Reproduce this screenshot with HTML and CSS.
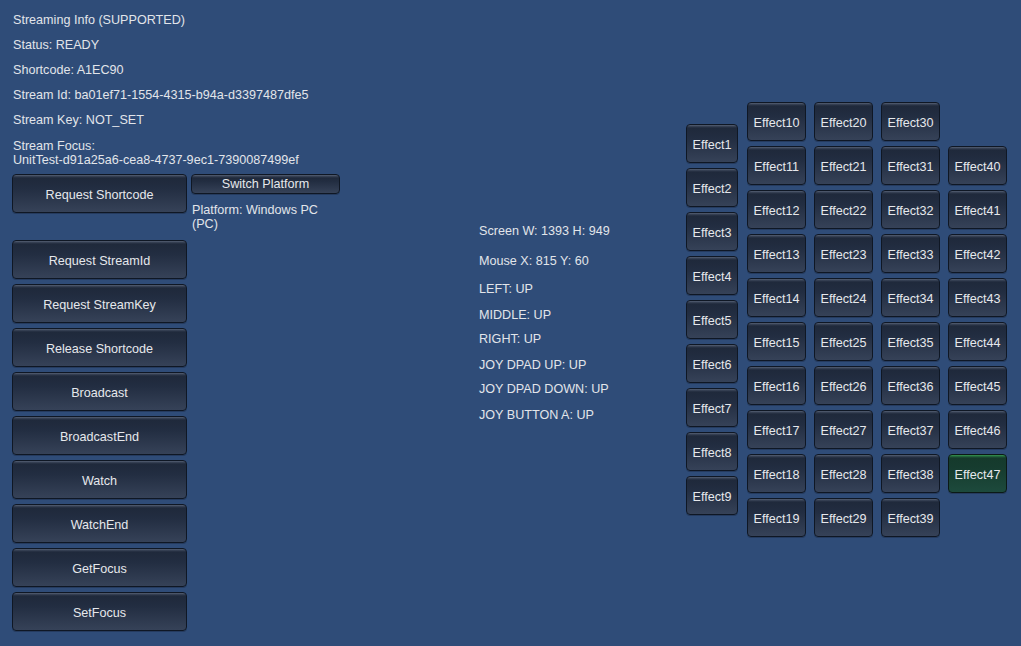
FILE: index.html
```html
<!DOCTYPE html>
<html>
<head>
<meta charset="utf-8">
<link rel="stylesheet" href="styles.css">
</head>
<body>
<div class="screen">
  <div class="left">
    <div class="label row">Streaming Info (SUPPORTED)</div>
    <div class="label row">Status: READY</div>
    <div class="label row">Shortcode: A1EC90</div>
    <div class="label row">Stream Id: ba01ef71-1554-4315-b94a-d3397487dfe5</div>
    <div class="label row">Stream Key: NOT_SET</div>
    <div class="label multi focus">Stream Focus:<br>UnitTest-d91a25a6-cea8-4737-9ec1-7390087499ef</div>
    <div class="short-row">
      <div class="btn big">Request Shortcode</div>
      <div class="platform">
        <div class="btn small">Switch Platform</div>
        <div class="label multi plat-text">Platform: Windows PC<br>(PC)</div>
      </div>
    </div>
    <div class="btn-list">
      <div class="btn big">Request StreamId</div>
      <div class="btn big">Request StreamKey</div>
      <div class="btn big">Release Shortcode</div>
      <div class="btn big">Broadcast</div>
      <div class="btn big">BroadcastEnd</div>
      <div class="btn big">Watch</div>
      <div class="btn big">WatchEnd</div>
      <div class="btn big">GetFocus</div>
      <div class="btn big">SetFocus</div>
    </div>
  </div>
  <div class="middle">
    <div class="label mrow h30">Screen W: 1393 H: 949</div>
    <div class="label mrow h28">Mouse X: 815 Y: 60</div>
    <div class="label mrow h26">LEFT: UP</div>
    <div class="label mrow h24">MIDDLE: UP</div>
    <div class="label mrow h26">RIGHT: UP</div>
    <div class="label mrow h24">JOY DPAD UP: UP</div>
    <div class="label mrow h26">JOY DPAD DOWN: UP</div>
    <div class="label mrow h24">JOY BUTTON A: UP</div>
  </div>
  <div class="effects">
    <div class="ecol c1">
      <div class="btn eff narrow">Effect1</div>
      <div class="btn eff narrow">Effect2</div>
      <div class="btn eff narrow">Effect3</div>
      <div class="btn eff narrow">Effect4</div>
      <div class="btn eff narrow">Effect5</div>
      <div class="btn eff narrow">Effect6</div>
      <div class="btn eff narrow">Effect7</div>
      <div class="btn eff narrow">Effect8</div>
      <div class="btn eff narrow">Effect9</div>
    </div>
    <div class="ecol">
      <div class="btn eff">Effect10</div>
      <div class="btn eff">Effect11</div>
      <div class="btn eff">Effect12</div>
      <div class="btn eff">Effect13</div>
      <div class="btn eff">Effect14</div>
      <div class="btn eff">Effect15</div>
      <div class="btn eff">Effect16</div>
      <div class="btn eff">Effect17</div>
      <div class="btn eff">Effect18</div>
      <div class="btn eff">Effect19</div>
    </div>
    <div class="ecol">
      <div class="btn eff">Effect20</div>
      <div class="btn eff">Effect21</div>
      <div class="btn eff">Effect22</div>
      <div class="btn eff">Effect23</div>
      <div class="btn eff">Effect24</div>
      <div class="btn eff">Effect25</div>
      <div class="btn eff">Effect26</div>
      <div class="btn eff">Effect27</div>
      <div class="btn eff">Effect28</div>
      <div class="btn eff">Effect29</div>
    </div>
    <div class="ecol">
      <div class="btn eff">Effect30</div>
      <div class="btn eff">Effect31</div>
      <div class="btn eff">Effect32</div>
      <div class="btn eff">Effect33</div>
      <div class="btn eff">Effect34</div>
      <div class="btn eff">Effect35</div>
      <div class="btn eff">Effect36</div>
      <div class="btn eff">Effect37</div>
      <div class="btn eff">Effect38</div>
      <div class="btn eff">Effect39</div>
    </div>
    <div class="ecol c5">
      <div class="btn eff">Effect40</div>
      <div class="btn eff">Effect41</div>
      <div class="btn eff">Effect42</div>
      <div class="btn eff">Effect43</div>
      <div class="btn eff">Effect44</div>
      <div class="btn eff">Effect45</div>
      <div class="btn eff">Effect46</div>
      <div class="btn eff green">Effect47</div>
    </div>
  </div>
</div>
</body>
</html>
```

FILE: styles.css
```css
html, body {
  margin: 0;
  padding: 0;
  height: 100%;
}
body {
  background: #2f4c78;
  font-family: "Liberation Sans", Arial, sans-serif;
  font-size: 12.6px;
  color: #e2e5ea;
  overflow: hidden;
}
.screen {
  display: flex;
  align-items: flex-start;
  padding-left: 12px;
}
.label {
  white-space: nowrap;
}
.left {
  width: 467px;
  flex: none;
  padding-top: 8px;
  display: flex;
  flex-direction: column;
}
.row {
  height: 25px;
  line-height: 25px;
  padding-left: 1px;
}
.multi {
  line-height: 14px;
  padding-left: 1px;
}
.focus {
  margin-top: 6px;
  height: 28px;
}
.short-row {
  margin-top: 7px;
  display: flex;
  gap: 4px;
  align-items: flex-start;
}
.platform {
  display: flex;
  flex-direction: column;
}
.plat-text {
  margin-top: 9px;
}
.btn-list {
  margin-top: 9px;
  display: flex;
  flex-direction: column;
  gap: 5px;
}
.btn {
  box-sizing: border-box;
  border: 1px solid #0f1724;
  border-radius: 4px;
  background: linear-gradient(#5a6478 0px, #3b4659 1px, #1f293b 3px, #222d41 35%, #364258 100%);
  display: flex;
  align-items: center;
  justify-content: center;
  padding-top: 2px;
  white-space: nowrap;
  color: #e6e8ec;
  box-shadow: 0 1px 0 rgba(20, 30, 50, 0.35);
}
.big {
  width: 175px;
  height: 39px;
}
.small {
  width: 149px;
  height: 20px;
  padding-top: 0;
  padding-bottom: 1px;
}
.middle {
  width: 207px;
  flex: none;
  padding-top: 224px;
  display: flex;
  flex-direction: column;
}
.mrow {
  line-height: 14px;
}
.h30 { height: 30px; }
.h28 { height: 28px; }
.h26 { height: 26px; }
.h24 { height: 24px; }
.effects {
  padding-top: 102px;
  display: flex;
  align-items: flex-start;
  gap: 8px;
}
.ecol {
  display: flex;
  flex-direction: column;
  gap: 5px;
}
.c1 {
  margin-top: 22px;
  margin-right: 1px;
}
.c5 {
  margin-top: 44px;
}
.eff {
  width: 59px;
  height: 39px;
}
.narrow {
  width: 52px;
}
.green {
  background: linear-gradient(#3a9a55 0px, #25703f 1px, #153a2c 3px, #163c2f 35%, #1d4a3c 100%);
  border-color: #0b1a16;
}
```
